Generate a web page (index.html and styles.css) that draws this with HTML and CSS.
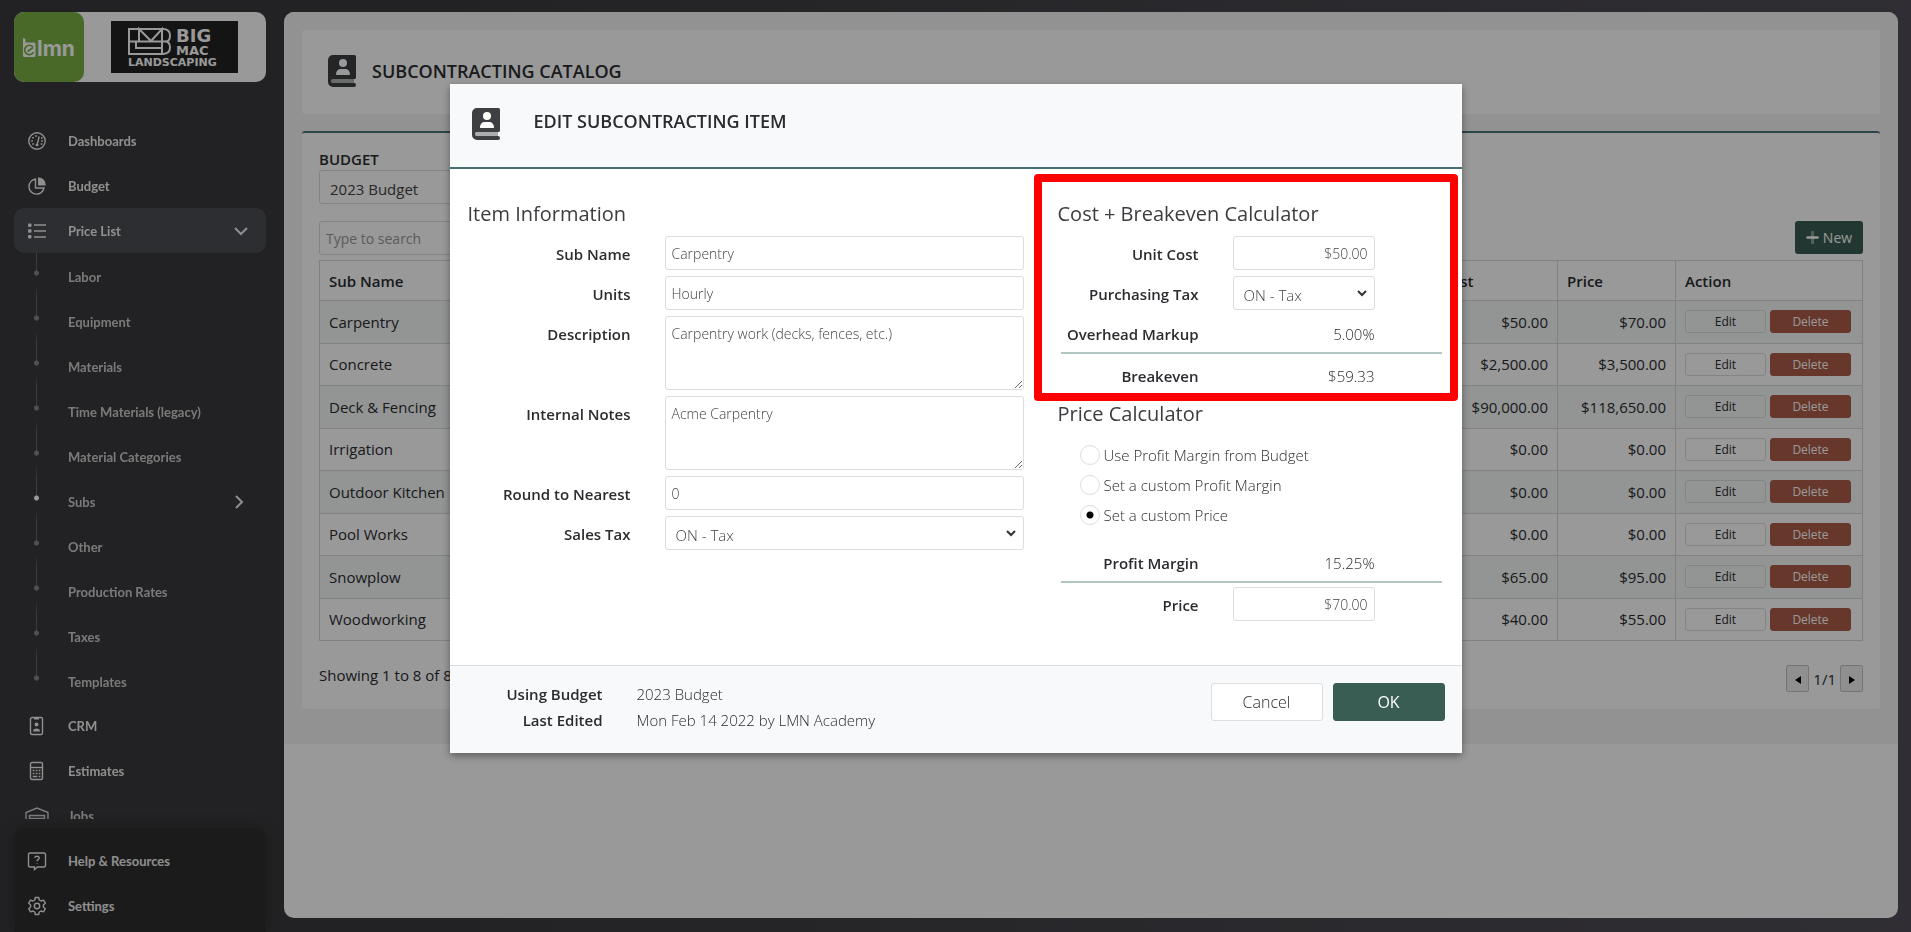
FILE: index.html
```
<!DOCTYPE html>
<html lang="en">

<head>
    <meta charset="UTF-8">
    <meta name="viewport" content="width=device-width, initial-scale=1.0">
    <title>Subcontracting Catalog</title>
    <link rel="stylesheet" href="styles.css">
</head>

<body>
    <!-- shared icons -->
    <svg class="sprite" aria-hidden="true">
        <symbol id="book" viewBox="0 0 28 32">
            <path d="M5 0h21.500a1.500 1.500 0 0 1 1.500 1.500v21a1.500 1.500 0 0 1-1.500 1.500H5a2 2 0 0 0 0 4h21a2 2 0 0 1 0 4H5a5 5 0 0 1-5-5V5a5 5 0 0 1 5-5z" fill="#3d3f42"/>
            <path d="M5 24h21v4H5a2 2 0 0 1 0-4z" fill="#3d3f42" opacity=".4"/>
            <circle cx="15" cy="8" r="4" fill="#fff"/>
            <path d="M9 20c-.8 0-1.200-.5-1-1.300.4-2.800 2.300-4.700 4.500-4.700h5c2.200 0 4.100 1.900 4.500 4.700.2.800-.2 1.300-1 1.300z" fill="#fff"/>
        </symbol>
    </svg>

    <aside class="sidebar">
        <div class="brand">
            <a href="#" class="brand-lmn" aria-label="lmn">
                <svg width="70" height="70" viewBox="0 0 70 70">
                    <path d="M9 26l2.500 1v3.500H20q1.500 0 1.500 1.500v11.500q0 1.500-1.500 1.500h-9.500Q9 45 9 43.500z" fill="#fff"/>
                    <path d="M19.200 35.200a4.700 4.700 0 1 0 .4 4.800" fill="none" stroke="#7bb045" stroke-width="1.700"/>
                    <path d="M13.500 39.500l5.500-4" fill="none" stroke="#7bb045" stroke-width="1.700"/>
                    <text x="23" y="44" class="lmn-text">lmn</text>
                </svg>
            </a>
            <a href="#" class="brand-company">
                <svg width="127" height="52" viewBox="0 0 127 52">
                    <g fill="none" stroke="#fff" stroke-width="2">
                        <path d="M18 8h34q7 0 7 6.500t-5 6q5 0 5 6t-7 6.500H18z"/>
                        <path d="M18 20.500h36M28 20V8l12 12L51 8v18M25 20v7h25M51 26v7"/>
                    </g>
                    <text x="65" y="21" class="logo-big">BIG</text>
                    <text x="65" y="34" class="logo-mac">MAC</text>
                    <text x="17" y="45" class="logo-land">LANDSCAPING</text>
                </svg>
            </a>
        </div>

        <nav class="menu">
            <a href="#" class="menu-item">
                <svg width="20" height="20" viewBox="0 0 20 20" class="icon">
                    <circle cx="10" cy="10" r="8.200"/>
                    <path d="M12.200 5.500l-1.800 7"/>
                    <circle cx="10" cy="13.800" r="1.500" class="fill"/>
                    <path d="M5 10h.1M6 6.800h.1M9 5h.1M15 10h.1M14.800 7h.1M6 13h.1M14.500 13h.1" class="dots"/>
                </svg>
                Dashboards
            </a>
            <a href="#" class="menu-item">
                <svg width="20" height="20" viewBox="0 0 20 20" class="icon">
                    <path d="M8.500 3a7.600 7.600 0 1 0 8.500 9H8.500z"/>
                    <path d="M11 1.200q7.500.6 7.800 8.300H11z" class="fill"/>
                </svg>
                Budget
            </a>
            <a href="#" class="menu-item active">
                <svg width="20" height="20" viewBox="0 0 20 20" class="icon">
                    <path d="M7 4h12M7 10h12M7 16h12"/>
                    <rect x="1" y="2.500" width="3.500" height="3.500" rx="1" class="fill"/>
                    <rect x="1" y="8.200" width="3.500" height="3.500" rx="1" class="fill"/>
                    <rect x="1" y="14" width="3.500" height="3.500" rx="1" class="fill"/>
                </svg>
                Price List
                <svg width="16" height="16" viewBox="0 0 16 16" class="icon arrow"><path d="M2 5l6 6 6-6"/></svg>
            </a>
            <div class="submenu">
                <a href="#" class="sub-item">Labor</a>
                <a href="#" class="sub-item">Equipment</a>
                <a href="#" class="sub-item">Materials</a>
                <a href="#" class="sub-item">Time Materials (legacy)</a>
                <a href="#" class="sub-item">Material Categories</a>
                <a href="#" class="sub-item current">Subs
                    <svg width="16" height="16" viewBox="0 0 16 16" class="icon arrow"><path d="M5 2l6 6-6 6"/></svg>
                </a>
                <a href="#" class="sub-item">Other</a>
                <a href="#" class="sub-item">Production Rates</a>
                <a href="#" class="sub-item">Taxes</a>
                <a href="#" class="sub-item">Templates</a>
            </div>
            <a href="#" class="menu-item">
                <svg width="20" height="20" viewBox="0 0 20 20" class="icon">
                    <rect x="3.500" y="1.500" width="12" height="17" rx="1.500"/>
                    <path d="M7 2h5v1.500H7z" class="fill"/>
                    <circle cx="9.500" cy="8.500" r="2" class="fill"/>
                    <path d="M6 15.500q0-3 3.500-3t3.500 3z" class="fill"/>
                </svg>
                CRM
            </a>
            <a href="#" class="menu-item">
                <svg width="20" height="20" viewBox="0 0 20 20" class="icon">
                    <rect x="3.500" y="1.500" width="12" height="17" rx="1.500"/>
                    <path d="M3.500 6.500h12"/>
                    <path d="M6.500 9.500h.1M9.500 9.500h.1M12.500 9.500h.1M6.500 12.500h.1M9.500 12.500h.1M12.500 12.500h.1M6.500 15.500h3M12.500 15.500h.1" class="dots"/>
                </svg>
                Estimates
            </a>
            <a href="#" class="menu-item">
                <svg width="24" height="20" viewBox="0 0 24 20" class="icon wide">
                    <path d="M1 20V6.500L12 2l11 4.500V20M4.500 20V9.500h15V20M4.500 12.500h15M4.500 15.500h15"/>
                </svg>
                Jobs
            </a>
        </nav>

        <div class="menu-bottom">
            <a href="#" class="menu-item">
                <svg width="20" height="20" viewBox="0 0 20 20" class="icon">
                    <path d="M3 2h14q1.500 0 1.500 1.500v11q0 1.500-1.500 1.500h-6.500L7.500 18.500V16H3q-1.500 0-1.500-1.500v-11Q1.500 2 3 2z"/>
                    <path d="M7.800 7q.2-1.800 2.200-1.800t2.200 1.600q0 1.200-1.200 1.800-1 .5-1 1.700M10 12.500v.6"/>
                </svg>
                Help &amp; Resources
            </a>
            <a href="#" class="menu-item">
                <svg width="20" height="20" viewBox="0 0 20 20" class="icon">
                    <circle cx="10" cy="10" r="2.700"/>
                    <path d="M8.300 1.500h3.400l.6 2.500 1.700 1 2.500-.8 1.800 3-1.900 1.800v2l1.900 1.800-1.800 3-2.500-.8-1.700 1-.6 2.500H8.300L7.700 16 6 15l-2.500.8-1.800-3L3.600 11V9L1.700 7.200l1.800-3L6 5l1.700-1z" stroke-linejoin="round"/>
                </svg>
                Settings
            </a>
        </div>
    </aside>

    <main class="content">
        <div class="page">
            <header class="page-header">
                <svg width="28" height="32" aria-hidden="true"><use href="#book"/></svg>
                <h1>SUBCONTRACTING CATALOG</h1>
            </header>

            <section class="card">
                <label class="budget-label" for="budget">BUDGET</label>
                <select id="budget" class="field select budget">
                    <option>2023 Budget</option>
                </select>

                <div class="toolbar">
                    <input type="search" class="field search" placeholder="Type to search" aria-label="Search">
                    <button class="btn-new">
                        <svg width="13" height="13" viewBox="0 0 13 13" aria-hidden="true">
                            <path d="M6.500 1v11" stroke="#fff" stroke-width="3" stroke-linecap="round" opacity=".4"/>
                            <path d="M1.500 6.500h10" stroke="#fff" stroke-width="2.500" stroke-linecap="round"/>
                        </svg>
                        New
                    </button>
                </div>

                <table class="items">
                    <thead>
                        <tr><th>Sub Name</th><th class="col-cost">Cost</th><th class="col-price">Price</th><th class="col-action">Action</th></tr>
                    </thead>
                    <tbody>
                        <tr><td>Carpentry</td><td class="num">$50.00</td><td class="num">$70.00</td><td><div class="actions"><button class="btn-edit">Edit</button><button class="btn-delete">Delete</button></div></td></tr>
                        <tr><td>Concrete</td><td class="num">$2,500.00</td><td class="num">$3,500.00</td><td><div class="actions"><button class="btn-edit">Edit</button><button class="btn-delete">Delete</button></div></td></tr>
                        <tr><td>Deck &amp; Fencing</td><td class="num">$90,000.00</td><td class="num">$118,650.00</td><td><div class="actions"><button class="btn-edit">Edit</button><button class="btn-delete">Delete</button></div></td></tr>
                        <tr><td>Irrigation</td><td class="num">$0.00</td><td class="num">$0.00</td><td><div class="actions"><button class="btn-edit">Edit</button><button class="btn-delete">Delete</button></div></td></tr>
                        <tr><td>Outdoor Kitchen</td><td class="num">$0.00</td><td class="num">$0.00</td><td><div class="actions"><button class="btn-edit">Edit</button><button class="btn-delete">Delete</button></div></td></tr>
                        <tr><td>Pool Works</td><td class="num">$0.00</td><td class="num">$0.00</td><td><div class="actions"><button class="btn-edit">Edit</button><button class="btn-delete">Delete</button></div></td></tr>
                        <tr><td>Snowplow</td><td class="num">$65.00</td><td class="num">$95.00</td><td><div class="actions"><button class="btn-edit">Edit</button><button class="btn-delete">Delete</button></div></td></tr>
                        <tr><td>Woodworking</td><td class="num">$40.00</td><td class="num">$55.00</td><td><div class="actions"><button class="btn-edit">Edit</button><button class="btn-delete">Delete</button></div></td></tr>
                    </tbody>
                </table>

                <div class="pager">
                    <span>Showing 1 to 8 of 8</span>
                    <div class="pager-nav">
                        <button aria-label="Previous"><svg width="6" height="8" viewBox="0 0 6 8"><path d="M6 0v8L0 4z"/></svg></button>
                        <span>1/1</span>
                        <button aria-label="Next"><svg width="6" height="8" viewBox="0 0 6 8"><path d="M0 0v8l6-4z"/></svg></button>
                    </div>
                </div>
            </section>
        </div>
    </main>

    <div class="overlay">
        <form class="modal" role="dialog" aria-labelledby="modalTitle">
            <header class="modal-header">
                <svg width="28" height="32" aria-hidden="true"><use href="#book"/></svg>
                <h2 id="modalTitle">EDIT SUBCONTRACTING ITEM</h2>
            </header>

            <div class="modal-body">
                <section>
                    <h3>Item Information</h3>
                    <div class="rows info">
                        <label for="subName">Sub Name</label>
                        <input type="text" id="subName" class="field" value="Carpentry">
                        <label for="units">Units</label>
                        <input type="text" id="units" class="field" value="Hourly">
                        <label for="description">Description</label>
                        <textarea id="description" class="field">Carpentry work (decks, fences, etc.)</textarea>
                        <label for="notes">Internal Notes</label>
                        <textarea id="notes" class="field">Acme Carpentry</textarea>
                        <label for="round">Round to Nearest</label>
                        <input type="text" id="round" class="field" value="0">
                        <label for="salesTax">Sales Tax</label>
                        <select id="salesTax" class="field select">
                            <option>ON - Tax</option>
                        </select>
                    </div>
                </section>

                <div class="calculators">
                    <section class="cost">
                        <h3>Cost + Breakeven Calculator</h3>
                        <div class="rows calc">
                            <label for="unitCost">Unit Cost</label>
                            <input type="text" id="unitCost" class="field amount" value="$50.00">
                            <label for="purchasingTax">Purchasing Tax</label>
                            <select id="purchasingTax" class="field select">
                                <option>ON - Tax</option>
                            </select>
                            <span class="name">Overhead Markup</span>
                            <output class="value">5.00%</output>
                        </div>
                        <hr>
                        <div class="rows calc">
                            <span class="name">Breakeven</span>
                            <output class="value">$59.33</output>
                        </div>
                    </section>

                    <section>
                        <h3>Price Calculator</h3>
                        <div class="radios">
                            <label><input type="radio" name="mode">Use Profit Margin from Budget</label>
                            <label><input type="radio" name="mode">Set a custom Profit Margin</label>
                            <label><input type="radio" name="mode" checked>Set a custom Price</label>
                        </div>
                        <div class="rows calc">
                            <span class="name">Profit Margin</span>
                            <output class="value">15.25%</output>
                        </div>
                        <hr>
                        <div class="rows calc">
                            <label for="price">Price</label>
                            <input type="text" id="price" class="field amount" value="$70.00">
                        </div>
                    </section>
                </div>
            </div>

            <footer class="modal-footer">
                <dl>
                    <dt>Using Budget</dt>
                    <dd>2023 Budget</dd>
                    <dt>Last Edited</dt>
                    <dd>Mon Feb 14 2022 by LMN Academy</dd>
                </dl>
                <div class="buttons">
                    <button type="button" class="btn">Cancel</button>
                    <button type="button" class="btn primary">OK</button>
                </div>
            </footer>
        </form>
    </div>
</body>

</html>
```
FILE: styles.css
```
* {
    box-sizing: border-box;
}

body {
    margin: 0;
    height: 100vh;
    display: flex;
    overflow: hidden;
    font-family: "Open Sans", sans-serif;
    font-size: 15px;
    color: #2b2c30;
    background: linear-gradient(to right, #39393c 20%, #504e57);
}

h1, h2, h3 {
    margin: 0;
}

button, input, select, textarea {
    font-family: inherit;
    color: inherit;
}

.sprite {
    position: absolute;
    width: 0;
    height: 0;
}

/* sidebar */
.sidebar {
    width: 284px;
    flex: none;
    padding: 12px 18px 0 14px;
    display: flex;
    flex-direction: column;
}

.brand {
    display: flex;
    height: 70px;
    flex: none;
    border-radius: 10px;
    overflow: hidden;
    background: #fff;
}

.brand-lmn {
    background: #7bb045;
    border-radius: 10px;
}

.lmn-text {
    font: 700 21px "Inter", sans-serif;
    fill: #fff;
}

.brand-company {
    flex: 1;
    display: flex;
    align-items: center;
    justify-content: center;
    padding-right: 1px;
}

.brand-company svg {
    background: #222;
}

.logo-big, .logo-mac, .logo-land {
    font: 700 18px "DejaVu Sans", sans-serif;
    fill: #fff;
}

.logo-mac {
    font-size: 13px;
}

.logo-land {
    font-size: 11px;
}

.menu {
    flex: 1;
    min-height: 0;
    margin-top: 36px;
    overflow: hidden;
    mask-image: linear-gradient(#000 calc(100% - 40px), rgba(0, 0, 0, 0.8));
}

.menu-item, .sub-item {
    display: flex;
    align-items: center;
    height: 45px;
    font-family: "Lato", sans-serif;
    font-size: 13px;
    font-weight: 700;
    color: #eee;
    text-decoration: none;
}

.menu-item {
    padding: 0 17px 0 13px;
    gap: 21px;
    border-radius: 10px;
}

.menu-item.active {
    background: #4b4d53;
}

.icon {
    flex: none;
    fill: none;
    stroke: #eee;
    stroke-width: 1.4;
}

.icon .fill {
    fill: #eee;
    stroke: none;
}

.icon .dots {
    stroke-width: 1.6;
    stroke-linecap: square;
}

.icon.wide {
    margin: 0 -2px;
}

.icon.arrow {
    margin-left: auto;
    stroke-width: 2;
}

.sub-item {
    padding: 2px 19px 0 0;
    color: #ccc;
    background: linear-gradient(transparent 32px, #666 44px) 22px 0 / 1px 100% no-repeat;
}

.sub-item:last-child {
    background: none;
}

/* connecting line with a dot at its end */
.sub-item::before {
    content: "";
    align-self: flex-start;
    width: 5px;
    height: 23px;
    margin: -2px 29px 0 20px;
    background:
        radial-gradient(circle at 50% 20px, #858585 2px, transparent 3px),
        linear-gradient(#666, #666) center / 1px 100% no-repeat;
}

.sub-item.current::before {
    background:
        radial-gradient(circle at 50% 20px, #fff 2px, transparent 3px),
        linear-gradient(#666, #666) center / 1px 100% no-repeat;
}

.menu-bottom {
    flex: none;
    margin-top: 9px;
    padding: 10px 0 4px;
    background: #2d2d2d;
    border-radius: 10px 10px 0 0;
    box-shadow: 0 0 16px rgba(0, 0, 0, 0.2);
}

/* page */
.content {
    flex: 1;
    margin: 12px 13px 14px 0;
    border-radius: 10px;
    background: #fff;
    overflow: hidden;
}

.page {
    padding: 18px 18px 35px;
    background: #f3f3f3;
}

.page-header {
    display: flex;
    align-items: center;
    gap: 16px;
    height: 84px;
    padding: 0 26px 3px;
    background: #fff;
    border-radius: 3px;
}

.page-header h1 {
    font-size: 18px;
    font-weight: 600;
}

.card {
    margin-top: 17px;
    padding: 15px 17px 17px;
    background: #fff;
    border-top: 2px solid #467577;
    border-radius: 3px;
}

.budget-label {
    display: block;
    line-height: 22px;
    font-weight: 600;
}

.field {
    height: 34px;
    padding: 0 6px;
    border: 1px solid #ddd;
    border-radius: 3px;
    background: #fff;
    font-size: 14px;
    color: #666;
}

.select {
    appearance: none;
    padding: 3px 24px 0 10px;
    font-size: 15px;
    background: #fff url("data:image/svg+xml,%3Csvg xmlns='http://www.w3.org/2000/svg' width='10' height='7'%3E%3Cpath d='M1 1l4 4 4-4' fill='none' stroke='%23333' stroke-width='2'/%3E%3C/svg%3E") no-repeat right 7px center;
}

.budget {
    display: block;
    width: 300px;
    color: #444;
}

.toolbar {
    display: flex;
    justify-content: space-between;
    margin: 17px 0 5px;
}

.search {
    width: 300px;
}

.search::placeholder {
    color: #999;
}

.btn-new {
    display: flex;
    align-items: center;
    justify-content: center;
    gap: 4px;
    width: 68px;
    height: 33px;
    padding: 0;
    border: none;
    border-radius: 3px;
    background: #3a5d53;
    color: #fff;
    font-size: 14px;
}

.items {
    width: 100%;
    border-collapse: collapse;
    table-layout: fixed;
}

.items th, .items td {
    padding: 0 9px;
    text-align: left;
    white-space: nowrap;
}

.items th {
    height: 40px;
    font-weight: 600;
    border-right: 1px solid #d8d8d8;
}

.items, .items td {
    border: 1px solid #d8d8d8;
}

.items td {
    padding-bottom: 1px;
}

.items th:first-child, .items td:first-child {
    border-right: none;
}

.items tbody tr {
    height: 42px;
}

.items tbody tr:nth-child(odd) {
    height: 43px;
    background: #f3f8f7;
}

.items .num {
    text-align: right;
}

.col-cost {
    width: 125px;
}

.col-price {
    width: 118px;
}

.col-action {
    width: 187px;
}

.actions {
    display: flex;
    gap: 4px;
}

.actions button {
    width: 81px;
    height: 23px;
    padding: 0;
    border: 1px solid #ddd;
    border-radius: 3px;
    background: #fff;
    font-size: 12px;
}

.actions .btn-edit {
    background: transparent;
}

.actions .btn-delete {
    background: #aa5d46;
    border-color: #aa5d46;
    color: #fff;
}

.pager {
    display: flex;
    justify-content: space-between;
    align-items: flex-start;
    margin-top: 24px;
    line-height: 20px;
}

.pager-nav {
    display: flex;
    align-items: center;
    gap: 4px;
}

.pager-nav button {
    width: 23px;
    height: 27px;
    padding: 0;
    border: 1px solid #c4c4c4;
    border-radius: 2px;
    background: #eee;
}

/* modal */
.overlay {
    position: fixed;
    inset: 0;
    padding: 84px 20px 0;
    background: rgba(0, 0, 0, 0.4);
}

.modal {
    max-width: 1012px;
    margin: 0 auto;
    background: #fff;
    box-shadow: 0 3px 8px rgba(0, 0, 0, 0.4);
}

.modal-header {
    display: flex;
    align-items: flex-start;
    gap: 34px;
    height: 85px;
    padding: 24px 22px 0;
    background: #f8f9fb;
    border-bottom: 2px solid #44716f;
}

.modal-header h2 {
    font-size: 18px;
    line-height: 26px;
    font-weight: 600;
}

.modal-body {
    display: grid;
    grid-template-columns: 1fr 384px;
    column-gap: 34px;
    padding: 31px 20px 44px 18px;
}

.modal h3 {
    margin-bottom: 8px;
    font-size: 20px;
    line-height: 28px;
    font-weight: 400;
    color: #3c3d40;
}

.rows {
    display: grid;
    gap: 6px 34px;
}

.rows label, .rows .name, .rows .value {
    padding-top: 2px;
    line-height: 32px;
    text-align: right;
}

.rows label, .rows .name {
    font-weight: 600;
}

.rows .field {
    width: 100%;
}

.modal .field, .value, .radios, .modal dd, .btn {
    font-weight: 300;
}

.modal .field {
    color: #444;
}

.info {
    grid-template-columns: 163px 1fr;
}

textarea.field {
    display: block;
    height: 74px;
    padding: 7px 6px;
}

.calc {
    grid-template-columns: 141px 142px;
}

.amount {
    text-align: right;
}

.cost {
    position: relative;
    margin-bottom: 8px;
}

/* highlight around the cost calculator */
.cost::after {
    content: "";
    position: absolute;
    inset: -26px -16px -9px -24px;
    border: 8px solid #f00;
    border-radius: 4px;
    pointer-events: none;
}

hr {
    height: 2px;
    margin: 2px 0 4px 3px;
    border: none;
    background: #b1c5c2;
}

.radios {
    margin: 12px 0 15px 22px;
}

.radios label {
    display: flex;
    align-items: center;
    gap: 4px;
    height: 30px;
}

.radios input {
    appearance: none;
    width: 20px;
    height: 20px;
    margin: 0;
    border: 1px solid #ddd;
    border-radius: 50%;
}

.radios input:checked {
    background: radial-gradient(circle, #000 3px, transparent 4px);
}

.modal-footer {
    display: flex;
    justify-content: space-between;
    align-items: flex-start;
    padding: 15px 17px 20px;
    background: #f8f9fb;
    border-top: 1px solid #ddd;
}

.modal-footer dl {
    display: grid;
    grid-template-columns: 136px 1fr;
    column-gap: 34px;
    margin: 0;
    line-height: 26px;
}

.modal-footer dt {
    font-weight: 600;
    text-align: right;
}

.modal-footer dd {
    margin: 0;
}

.buttons {
    display: flex;
    gap: 10px;
    padding-top: 2px;
}

.btn {
    width: 112px;
    height: 38px;
    border: 1px solid #ddd;
    border-radius: 3px;
    background: #fff;
    font-size: 16px;
}

.btn.primary {
    background: #3a5d53;
    border-color: #3a5d53;
    color: #fff;
    font-weight: 400;
}
```
